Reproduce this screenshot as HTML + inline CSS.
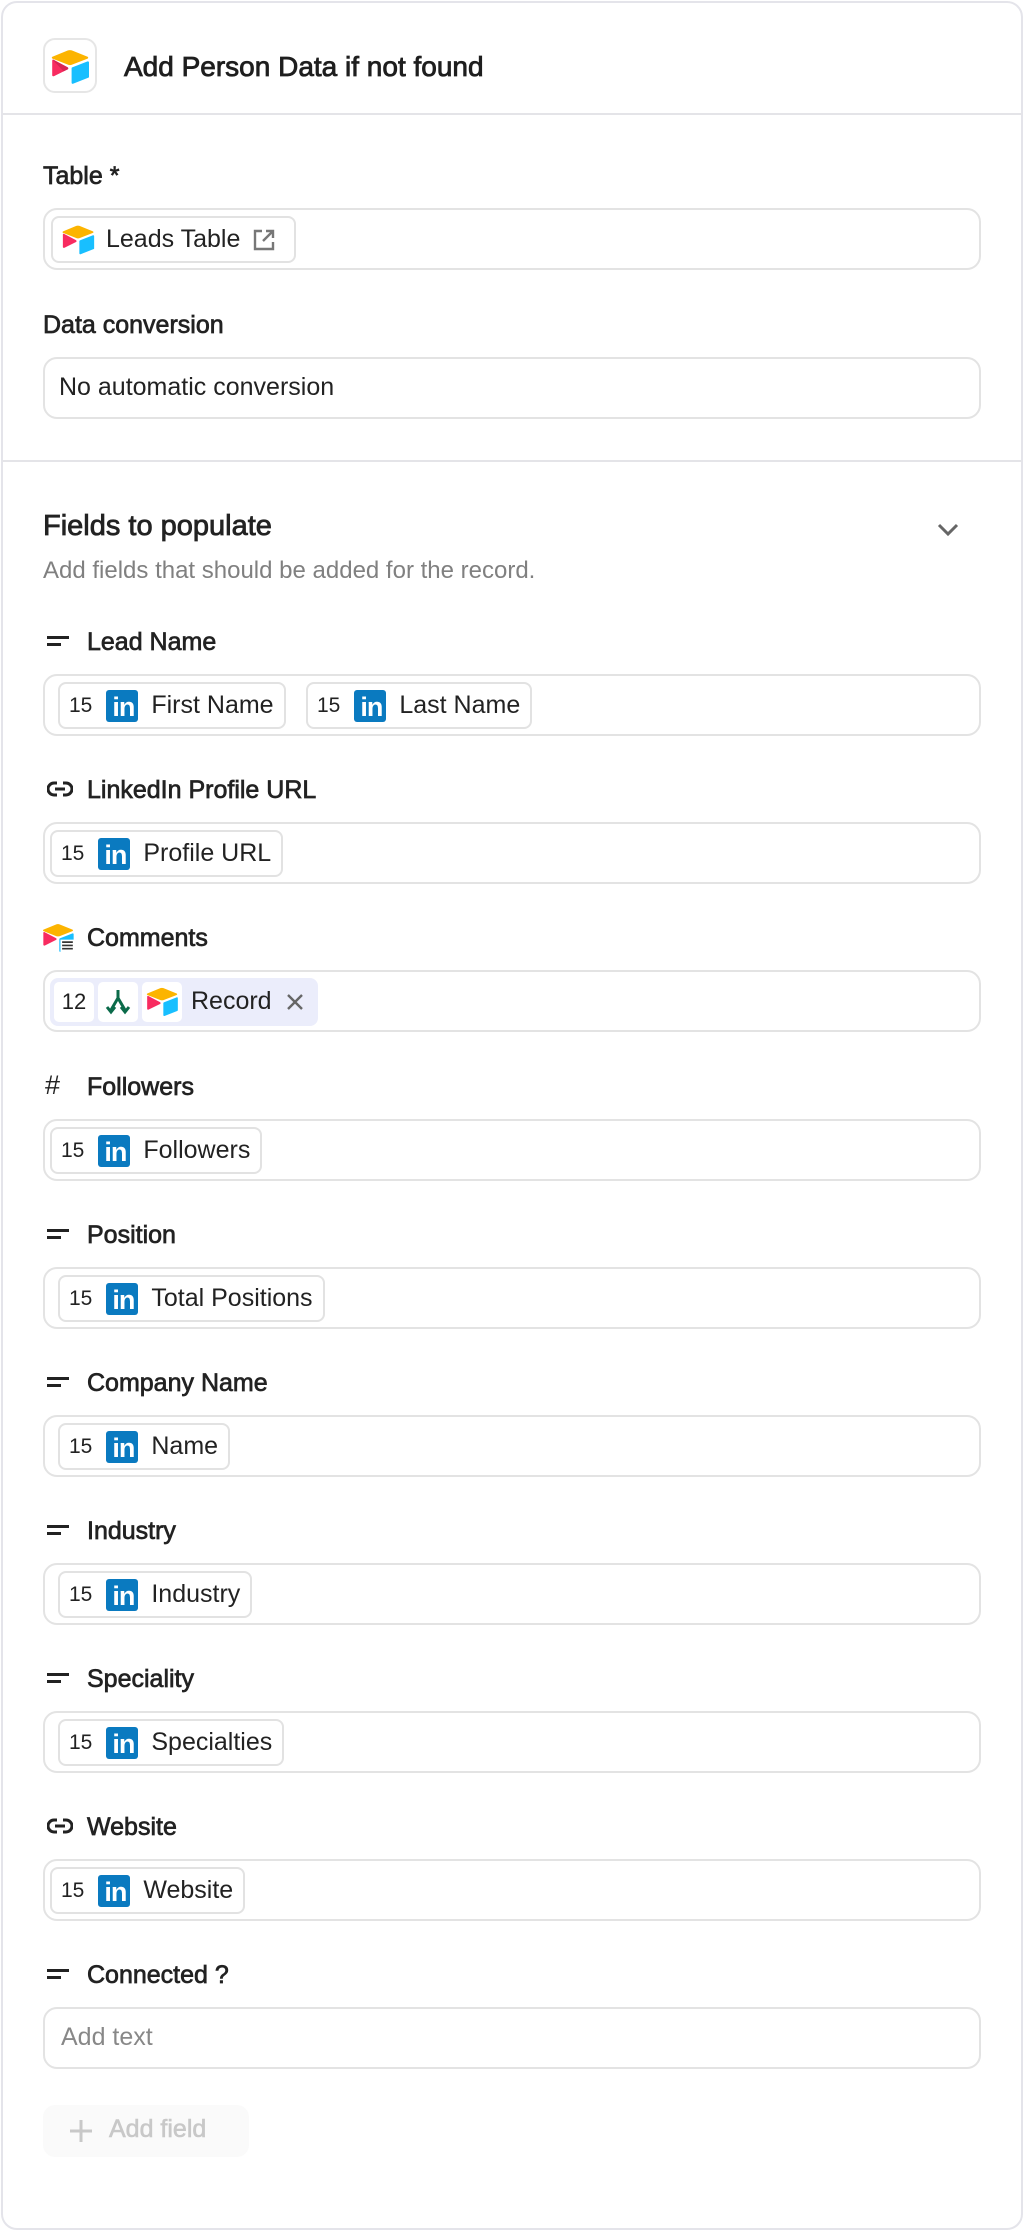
<!DOCTYPE html>
<html><head><meta charset="utf-8">
<style>
*{box-sizing:border-box;margin:0;padding:0}
html,body{width:1024px;height:2232px;background:#fff;overflow:hidden}
body{font-family:"Liberation Sans",sans-serif;color:#1f1f1f;position:relative}
.card{position:absolute;left:1px;top:1px;width:1022px;height:2229px;border:2px solid #e4e4ea;border-radius:16px}
.hr{position:absolute;left:2px;right:2px;height:2px;background:#e4e4e8}
.abs{position:absolute}
.lbl{position:absolute;left:43px;font-size:25px;font-weight:normal;-webkit-text-stroke:0.7px #222;line-height:30px;color:#222}
.flbl{position:absolute;left:87px;font-size:25px;font-weight:normal;-webkit-text-stroke:0.7px #222;line-height:30px;color:#222}
.inp{position:absolute;left:43px;width:938px;height:62px;border:2px solid #e3e3e3;border-radius:14px;background:#fff}
.chip{position:absolute;top:6px;height:47px;border:2px solid #e2e2e2;border-radius:8px;display:flex;align-items:center;padding:0 10px 0 9px;font-size:25px;color:#222;white-space:nowrap;background:#fff}
.num{font-size:21px;margin-right:14px;color:#222}
.li{width:32px;height:32px;background:#0a7ac0;border-radius:3px;margin-right:13px;position:relative;flex:none}
.li b{position:absolute;left:6px;top:0;color:#fff;font-size:27px;font-weight:bold;line-height:34px;letter-spacing:-1px}
.ficon{position:absolute;left:47px}
</style></head><body>
<div class="card"></div>

<div class="abs" style="left:43px;top:38px;width:54px;height:55px;border:2px solid #e6e6e6;border-radius:12px"></div>
<svg class="abs" style="left:50px;top:50px" width="40" height="34" viewBox="0 0 200 170">
<path d="M90 2L12 34c-4 2-4 7 0 9l79 31c6 2 12 2 18 0l79-31c4-2 4-7 0-9L109 2c-6-2-13-2-19 0z" fill="#FCB400"/>
<path d="M108 92v72c0 4 4 6 7 5l76-30c3-1 4-3 4-5V62c0-4-4-6-7-5l-77 30c-2 1-3 3-3 5z" fill="#18BFFF"/>
<path d="M90 96L19 131c-3 1-8-1-8-5V53c0-2 1-3 2-4 1-1 4-1 5 0l70 37c4 2 4 8 2 10z" fill="#F82B60"/>
<path d="M90 96l-22 11L13 49c1-1 4-1 5 0l70 37c4 2 4 8 2 10z" fill="#BA1E45" opacity=".5"/>
</svg>
<div class="abs" style="left:124px;top:50px;font-size:28px;-webkit-text-stroke:0.8px #1e1e1e;line-height:34px;color:#1e1e1e">Add Person Data if not found</div>
<div class="hr" style="top:113px"></div>

<div class="lbl" style="top:161px">Table *</div>
<div class="inp" style="top:208px">
  <div class="chip" style="left:6px;width:245px;padding-left:8px">
    <svg width="34" height="30" viewBox="0 0 200 170" style="margin-right:11px;flex:none">
    <path d="M90 2L12 34c-4 2-4 7 0 9l79 31c6 2 12 2 18 0l79-31c4-2 4-7 0-9L109 2c-6-2-13-2-19 0z" fill="#FCB400"/>
    <path d="M108 92v72c0 4 4 6 7 5l76-30c3-1 4-3 4-5V62c0-4-4-6-7-5l-77 30c-2 1-3 3-3 5z" fill="#18BFFF"/>
    <path d="M90 96L19 131c-3 1-8-1-8-5V53c0-2 1-3 2-4 1-1 4-1 5 0l70 37c4 2 4 8 2 10z" fill="#F82B60"/></svg>
    Leads Table
    <svg width="24" height="24" viewBox="0 0 24 24" style="margin-left:12px"><path d="M10 3H3v18h18v-7M14 3h7v7M21 3L11 13" fill="none" stroke="#777" stroke-width="2.4"/></svg>
  </div>
</div>

<div class="lbl" style="top:310px">Data conversion</div>
<div class="inp" style="top:357px"><div class="abs" style="left:14px;top:14px;font-size:25px;color:#222">No automatic conversion</div></div>
<div class="hr" style="top:460px"></div>

<div class="abs" style="left:43px;top:510px;font-size:29px;-webkit-text-stroke:0.8px #222;color:#222">Fields to populate</div>
<svg class="abs" style="left:937px;top:523px" width="22" height="14" viewBox="0 0 22 14"><path d="M2 2l9 9 9-9" fill="none" stroke="#666" stroke-width="3"/></svg>
<div class="abs" style="left:43px;top:557px;font-size:24px;color:#808080">Add fields that should be added for the record.</div>

<svg class="ficon" style="top:634px" width="24" height="16"><rect x="0" y="2" width="22" height="3" fill="#222"/><rect x="0" y="9" width="14" height="3" fill="#222"/></svg>
<div class="flbl" style="top:627px">Lead Name</div>
<div class="inp" style="top:674px">
  <div class="chip" style="left:13px"><span class="num">15</span><span class="li"><b>in</b></span>First Name</div>
  <div class="chip" style="left:261px"><span class="num">15</span><span class="li"><b>in</b></span>Last Name</div>
</div>

<svg class="ficon" style="top:779px" width="26" height="20" viewBox="0 0 26 20"><path d="M10 4H7a6 6 0 0 0 0 12h3M16 4h3a6 6 0 0 1 0 12h-3M8 10h10" fill="none" stroke="#222" stroke-width="3"/></svg>
<div class="flbl" style="top:775px">LinkedIn Profile URL</div>
<div class="inp" style="top:822px">
  <div class="chip" style="left:5px"><span class="num">15</span><span class="li"><b>in</b></span>Profile URL</div>
</div>

<svg class="abs" style="left:41px;top:924px" width="34" height="28" viewBox="0 0 200 170">
<path d="M90 2L12 34c-4 2-4 7 0 9l79 31c6 2 12 2 18 0l79-31c4-2 4-7 0-9L109 2c-6-2-13-2-19 0z" fill="#FCB400"/>
<path d="M108 92v72c0 4 4 6 7 5l76-30c3-1 4-3 4-5V62c0-4-4-6-7-5l-77 30c-2 1-3 3-3 5z" fill="#18BFFF"/>
<path d="M90 96L19 131c-3 1-8-1-8-5V53c0-2 1-3 2-4 1-1 4-1 5 0l70 37c4 2 4 8 2 10z" fill="#F82B60"/>
<rect x="115" y="95" width="85" height="75" fill="#fff"/>
<path d="M125 110h65M125 130h65M125 150h65" stroke="#333" stroke-width="10"/></svg>
<div class="flbl" style="top:923px">Comments</div>
<div class="inp" style="top:970px">
  <div class="abs" style="left:5px;top:6px;width:268px;height:48px;background:#ebedfb;border-radius:8px">
    <div class="abs" style="left:4px;top:4px;width:40px;height:40px;background:#fff;border-radius:5px;font-size:22px;line-height:40px;text-align:center">12</div>
    <div class="abs" style="left:48px;top:4px;width:40px;height:40px;background:#fff;border-radius:5px">
      <svg width="40" height="40" viewBox="0 0 40 40"><path d="M20 8v8M20 16l-7 12M20 16l7 12M9 25l4 5 4-5M23 25l4 5 4-5" fill="none" stroke="#0b6b4a" stroke-width="3"/></svg></div>
    <div class="abs" style="left:92px;top:4px;width:40px;height:40px;background:#fff;border-radius:5px">
      <svg width="40" height="40" viewBox="-20 -30 240 230"><path d="M90 2L12 34c-4 2-4 7 0 9l79 31c6 2 12 2 18 0l79-31c4-2 4-7 0-9L109 2c-6-2-13-2-19 0z" fill="#FCB400"/>
      <path d="M108 92v72c0 4 4 6 7 5l76-30c3-1 4-3 4-5V62c0-4-4-6-7-5l-77 30c-2 1-3 3-3 5z" fill="#18BFFF"/>
      <path d="M90 96L19 131c-3 1-8-1-8-5V53c0-2 1-3 2-4 1-1 4-1 5 0l70 37c4 2 4 8 2 10z" fill="#F82B60"/></svg></div>
    <div class="abs" style="left:141px;top:9px;font-size:25px;color:#222">Record</div>
    <svg class="abs" style="left:236px;top:15px" width="18" height="18"><path d="M2 2l14 14M16 2L2 16" stroke="#666" stroke-width="2.4"/></svg>
  </div>
</div>

<div class="abs" style="left:45px;top:1070px;font-size:27px;color:#222">#</div>
<div class="flbl" style="top:1072px">Followers</div>
<div class="inp" style="top:1119px">
  <div class="chip" style="left:5px"><span class="num">15</span><span class="li"><b>in</b></span>Followers</div>
</div>

<svg class="ficon" style="top:1227px" width="24" height="16"><rect x="0" y="2" width="22" height="3" fill="#222"/><rect x="0" y="9" width="14" height="3" fill="#222"/></svg>
<div class="flbl" style="top:1220px">Position</div>
<div class="inp" style="top:1267px">
  <div class="chip" style="left:13px"><span class="num">15</span><span class="li"><b>in</b></span>Total Positions</div>
</div>

<svg class="ficon" style="top:1375px" width="24" height="16"><rect x="0" y="2" width="22" height="3" fill="#222"/><rect x="0" y="9" width="14" height="3" fill="#222"/></svg>
<div class="flbl" style="top:1368px">Company Name</div>
<div class="inp" style="top:1415px">
  <div class="chip" style="left:13px"><span class="num">15</span><span class="li"><b>in</b></span>Name</div>
</div>

<svg class="ficon" style="top:1523px" width="24" height="16"><rect x="0" y="2" width="22" height="3" fill="#222"/><rect x="0" y="9" width="14" height="3" fill="#222"/></svg>
<div class="flbl" style="top:1516px">Industry</div>
<div class="inp" style="top:1563px">
  <div class="chip" style="left:13px"><span class="num">15</span><span class="li"><b>in</b></span>Industry</div>
</div>

<svg class="ficon" style="top:1671px" width="24" height="16"><rect x="0" y="2" width="22" height="3" fill="#222"/><rect x="0" y="9" width="14" height="3" fill="#222"/></svg>
<div class="flbl" style="top:1664px">Speciality</div>
<div class="inp" style="top:1711px">
  <div class="chip" style="left:13px"><span class="num">15</span><span class="li"><b>in</b></span>Specialties</div>
</div>

<svg class="ficon" style="top:1816px" width="26" height="20" viewBox="0 0 26 20"><path d="M10 4H7a6 6 0 0 0 0 12h3M16 4h3a6 6 0 0 1 0 12h-3M8 10h10" fill="none" stroke="#222" stroke-width="3"/></svg>
<div class="flbl" style="top:1812px">Website</div>
<div class="inp" style="top:1859px">
  <div class="chip" style="left:5px"><span class="num">15</span><span class="li"><b>in</b></span>Website</div>
</div>

<svg class="ficon" style="top:1967px" width="24" height="16"><rect x="0" y="2" width="22" height="3" fill="#222"/><rect x="0" y="9" width="14" height="3" fill="#222"/></svg>
<div class="flbl" style="top:1960px">Connected ?</div>
<div class="inp" style="top:2007px"><div class="abs" style="left:16px;top:14px;font-size:25px;color:#888">Add text</div></div>

<div class="abs" style="left:43px;top:2105px;width:206px;height:52px;background:#fafafa;border-radius:12px"></div>
<svg class="abs" style="left:68px;top:2118px" width="26" height="26"><path d="M13 2v22M2 13h22" stroke="#c8c8c8" stroke-width="3"/></svg>
<div class="abs" style="left:109px;top:2115px;font-size:25px;-webkit-text-stroke:0.6px #c8c8c8;color:#c8c8c8">Add field</div>
</body></html>
